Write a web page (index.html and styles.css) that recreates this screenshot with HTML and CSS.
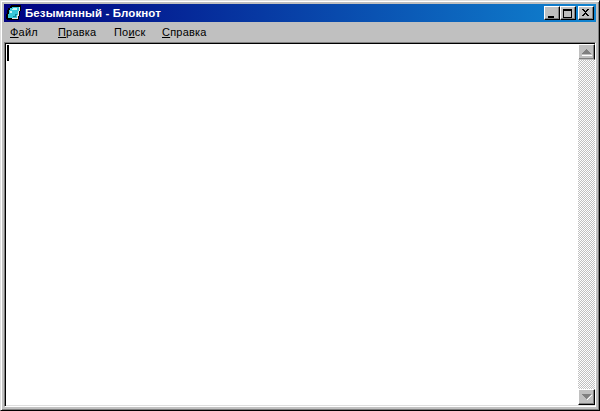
FILE: index.html
```html
<!DOCTYPE html>
<html lang="ru">
<head>
<meta charset="utf-8">
<title>Безымянный - Блокнот</title>
<link rel="stylesheet" href="styles.css">
</head>
<body>
<div class="window">
  <div class="titlebar">
    <svg class="app-icon" width="16" height="16" viewBox="0 0 16 16" shape-rendering="crispEdges">
      <path d="M5 0h10v6h-1v5h-1v4H1v-1H0V9h1V5h1V3h2V1h1z" fill="#000"/>
      <path d="M13 2h1v4h-1v5h-1v3H6v-1h5v-3h1V6h1z" fill="#e8e8e8"/>
      <path d="M6 2h7v4h-1v4h-1v3H2V9h1V5h1V3h2z" fill="#38c8d8"/>
      <path d="M7 3h4v2H6V4h1zM4 6h2v2H4z" fill="#c8f8f8"/>
      <path d="M9 9h2v1h-1v2H7v-1h2z" fill="#108898"/>
    </svg>
    <span class="title">Безымянный - Блокнот</span>
    <div class="caption-buttons">
      <button class="cap-btn" aria-label="Свернуть"><svg width="10" height="9" shape-rendering="crispEdges"><path d="M1 7h6v2H1z"/></svg></button>
      <button class="cap-btn cap-gap" aria-label="Развернуть"><svg width="10" height="9" shape-rendering="crispEdges"><path d="M0 0h9v9H0zM1 2v6h7V2z" fill-rule="evenodd"/></svg></button>
      <button class="cap-btn" aria-label="Закрыть"><svg width="10" height="9" shape-rendering="crispEdges"><path d="M1 0h2v1h1v1h1V1h1V0h2v1H7v1H6v1H5v1h1v1h1v1h1v1H6V6H5V5H4v1H3v1H1V6h1V5h1V4h1V3H3V2H2V1H1z"/></svg></button>
    </div>
  </div>
  <div class="menubar">
    <span class="menu-item"><u>Ф</u>айл</span>
    <span class="menu-item"><u>П</u>равка</span>
    <span class="menu-item">По<u>и</u>ск</span>
    <span class="menu-item"><u>С</u>правка</span>
  </div>
  <div class="client">
    <div class="editor"><div class="caret"></div></div>
    <div class="scrollbar">
      <div class="sb-btn sb-up"><svg width="10" height="7" shape-rendering="crispEdges"><path d="M4 0h1v1h1v1h1v1h1v1h1v1H0V4h1V3h1V2h1V1h1z" fill="#808080"/><path d="M0 6h10v1H0z" fill="#fff"/></svg></div>
      <div class="sb-track"></div>
      <div class="sb-btn sb-down"><svg width="10" height="6" shape-rendering="crispEdges"><path d="M0 0h9v1H8v1H7v1H6v1H5v1H4V4H3V3H2V2H1V1H0z" fill="#808080"/><path d="M9 1h1v1H9zM8 2h1v1H8zM7 3h1v1H7zM6 4h1v1H6zM5 5h1v1H5z" fill="#fff"/></svg></div>
    </div>
  </div>
</div>
</body>
</html>
```

FILE: styles.css
```css
* { box-sizing: border-box; }
html, body { margin: 0; padding: 0; background: #c0c0c0; overflow: hidden; }
.window {
  width: 600px;
  height: 411px;
  display: flex;
  flex-direction: column;
  padding: 4px;
  background: #c0c0c0;
  border: 1px solid;
  border-color: #dfdfdf #000 #000 #dfdfdf;
  box-shadow: inset 1px 1px 0 #fff, inset -1px -1px 0 #808080;
  font-family: "Liberation Sans", Arial, sans-serif;
  font-size: 11px;
}
.titlebar {
  height: 18px;
  flex: none;
  margin: -1px -1px 0;
  padding: 0 2px;
  display: flex;
  align-items: center;
  background: linear-gradient(to right, #000080, #1084d0);
  color: #fff;
}
.app-icon { flex: none; margin-right: 3px; }
.title { font-weight: bold; font-size: 11.5px; letter-spacing: 0.1px; white-space: nowrap; flex: 1; }
.caption-buttons { display: flex; }
.cap-btn {
  width: 16px;
  height: 14px;
  padding: 0;
  display: flex;
  align-items: center;
  justify-content: center;
  background: #c0c0c0;
  border: 1px solid;
  border-color: #fff #000 #000 #fff;
  box-shadow: inset -1px -1px 0 #808080;
}
.cap-gap { margin-right: 2px; }
.menubar {
  height: 20px;
  flex: none;
  display: grid;
  grid-template-columns: 48px 56px 48px auto;
  justify-content: start;
  align-items: center;
  padding-left: 5px;
  color: #000;
  font-size: 11px;
  letter-spacing: 0.2px;
}
.client {
  flex: 1;
  min-height: 0;
  display: flex;
  border: 1px solid;
  border-color: #808080 #fff #fff #808080;
  box-shadow: inset 1px 1px 0 #000, inset -1px -1px 0 #dfdfdf;
  padding: 1px 0 1px 2px;
  margin: 0 -1px -1px -1px;
  background: #fff;
}
.editor { flex: 1; padding: 1px 0 0; }
.caret { width: 2px; height: 16px; background: #000; }
.scrollbar {
  width: 17px;
  flex: none;
  display: flex;
  flex-direction: column;
}
.sb-btn {
  height: 16px;
  flex: none;
  display: flex;
  align-items: center;
  justify-content: center;
  background: #c0c0c0;
  border: 1px solid;
  border-color: #fff #000 #c0c0c0 #fff;
  box-shadow: inset -1px -1px 0 #808080;
}
.sb-down { border-bottom-color: #000; }
.sb-track {
  flex: 1;
  background-color: #fff;
  background-image: conic-gradient(#c0c0c0 25%, transparent 0 50%, #c0c0c0 0 75%, transparent 0);
  background-size: 2px 2px;
}
```
